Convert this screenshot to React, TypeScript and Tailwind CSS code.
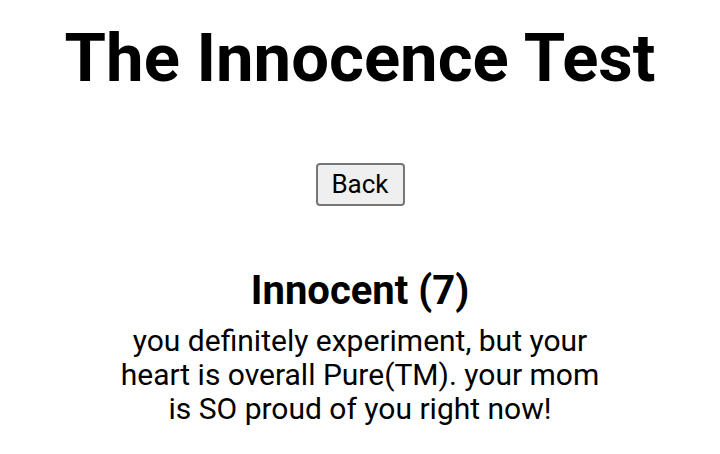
import React from 'react';

const App: React.FC = () => {
  return (
    <div className="min-h-screen bg-white text-black flex flex-col items-center font-['Roboto',sans-serif]">
      <h1 className="mt-[25px] text-[67px] font-bold leading-none tracking-normal">The Innocence Test</h1>

      <button
        type="button"
        className="mt-[71px] w-[89px] h-[43px] text-[26px] bg-[#efefef] border-2 border-[#767676] rounded-[4px] text-black"
      >
        Back
      </button>

      {/* Result card */}
      <div className="mt-[61px] flex flex-col items-center text-center w-[490px]">
        <h2 className="text-[40px] font-bold leading-[47px]">Innocent (7)</h2>
        <p className="mt-[10px] text-[30px] leading-[34px]">
          you definitely experiment, but your heart is overall Pure(TM). your mom is SO proud of you right now!
        </p>
      </div>
    </div>
  );
};

export default App;
